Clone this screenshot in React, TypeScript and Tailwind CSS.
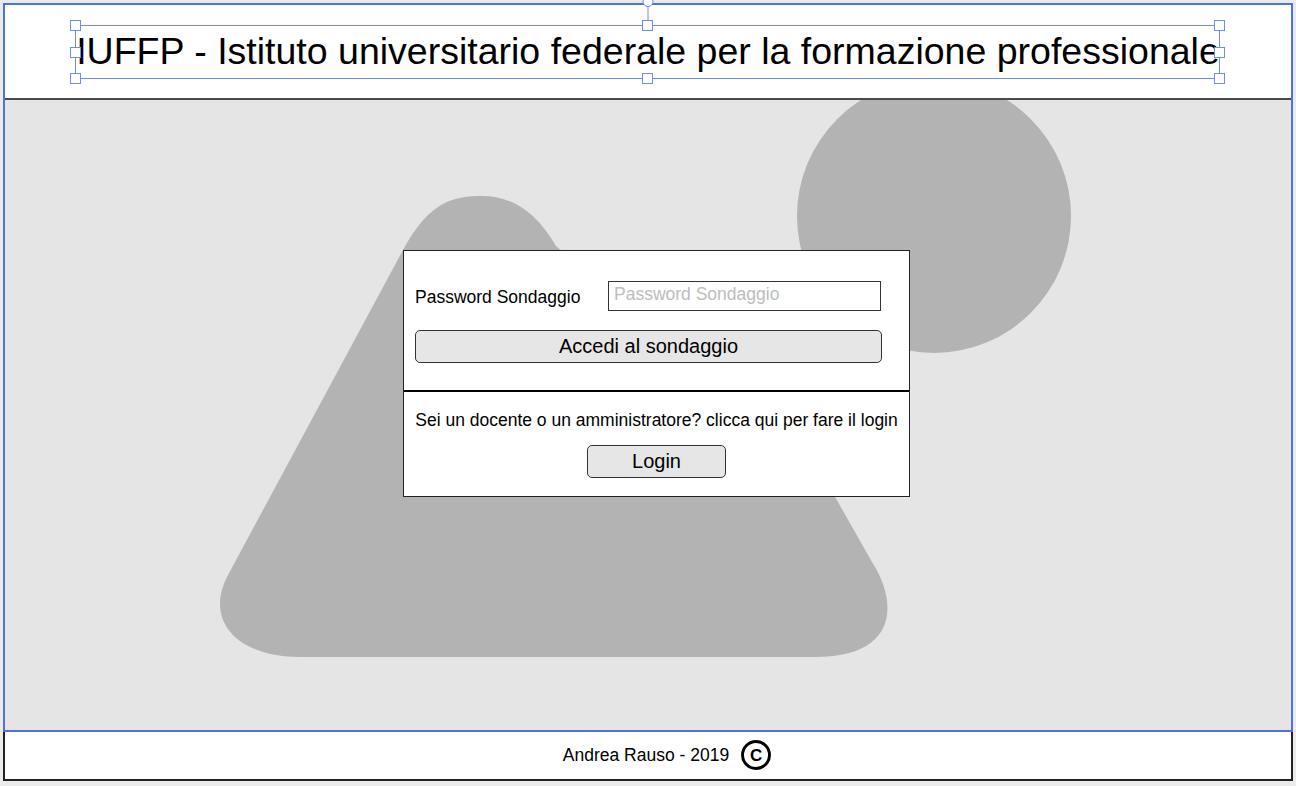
import React from 'react';

// Small square handle of the selection box around the title
function Handle() {
  return <div className="w-[11px] h-[11px] bg-white border border-[#6b8ef0]" />;
}

function Header() {
  return (
    <header className="relative h-[95px] bg-white border-b-2 border-[#4a4a4a] flex items-center justify-center">
      <h1 className="text-[37.5px] text-black leading-normal whitespace-nowrap">
        IUFFP - Istituto universitario federale per la formazione professionale
      </h1>

      {/* selection frame drawn over the title */}
      <div className="absolute left-[70px] top-[20px] w-[1145px] h-[54px] border border-[#6b8ef0] pointer-events-none">
        <div className="absolute bottom-full left-1/2 -translate-x-1/2 mb-[4px] flex flex-col items-center">
          <div className="w-[11px] h-[11px] rounded-full bg-white border border-[#6b8ef0]" />
          <div className="w-px h-[15px] bg-[#6b8ef0]" />
        </div>
        <div className="absolute -inset-[6px] flex flex-col justify-between">
          <div className="flex justify-between">
            <Handle />
            <Handle />
            <Handle />
          </div>
          <div className="flex justify-between">
            <Handle />
            <Handle />
          </div>
          <div className="flex justify-between">
            <Handle />
            <Handle />
            <Handle />
          </div>
        </div>
      </div>
    </header>
  );
}

function Shapes() {
  return (
    <svg className="absolute inset-0 w-full h-full" viewBox="5 100 1286 630">
      <circle cx="934" cy="216" r="137" fill="#b3b3b3" />
      <path
        d="M 482 196 C 510 196 535 210 556 246 L 830 488 L 872 562 C 900 606 895 657 815 657 L 300 657 C 236 657 204 620 228 575 L 403 250 C 430 200 455 196 482 196 Z"
        fill="#b3b3b3"
      />
    </svg>
  );
}

function LoginPanel() {
  return (
    <div className="relative w-[507px] bg-white border border-[#222]">
      <div className="pt-[30px] pb-[27px] px-[11px] border-b-2 border-black">
        <div className="flex items-center">
          <label className="w-[193px] text-[17.5px] pt-[3px] text-black">Password Sondaggio</label>
          <input
            type="password"
            placeholder="Password Sondaggio"
            className="w-[273px] h-[30px] border border-[#333] px-[5px] pb-[3px] text-[17.5px] bg-white outline-none placeholder:text-[#bdbdbd]"
          />
        </div>
        <button className="mt-[19px] w-[467px] h-[33px] pb-[4px] rounded-[5px] border border-[#333] bg-[#e6e6e6] text-[20px] text-black">
          Accedi al sondaggio
        </button>
      </div>
      <div className="pt-[18px] pb-[18px] flex flex-col items-center">
        <p className="text-[17.5px] leading-[20px] text-black whitespace-nowrap">
          Sei un docente o un amministratore? clicca qui per fare il login
        </p>
        <button className="mt-[15px] w-[139px] h-[33px] pb-[4px] rounded-[5px] border border-[#333] bg-[#e6e6e6] text-[20px] text-black">
          Login
        </button>
      </div>
    </div>
  );
}

function Footer() {
  return (
    <footer className="ml-[3px] w-[1290px] h-[49px] bg-white border-x-2 border-b-2 border-[#222] flex items-center justify-center pb-[1px] pr-[4px]">
      <span className="relative text-[17.5px] text-black">
        Andrea Rauso - 2019
        <span className="absolute left-[calc(100%+12px)] top-1/2 -translate-y-1/2 w-[30px] h-[30px] rounded-full border-[3px] border-black flex items-center justify-center text-[17px] font-bold leading-none">
          C
        </span>
      </span>
    </footer>
  );
}

export default function App() {
  return (
    <div className="min-h-[786px] bg-[#ebebeb] pt-[3px] font-['Liberation_Sans',Arial,sans-serif]">
      <div className="ml-[3px] w-[1290px] border-2 border-[#4c72e6]">
        <Header />
        <main className="relative h-[630px] bg-[#e5e5e5] overflow-hidden pl-[398px] pt-[150px]">
          <Shapes />
          <LoginPanel />
        </main>
      </div>
      <Footer />
    </div>
  );
}
